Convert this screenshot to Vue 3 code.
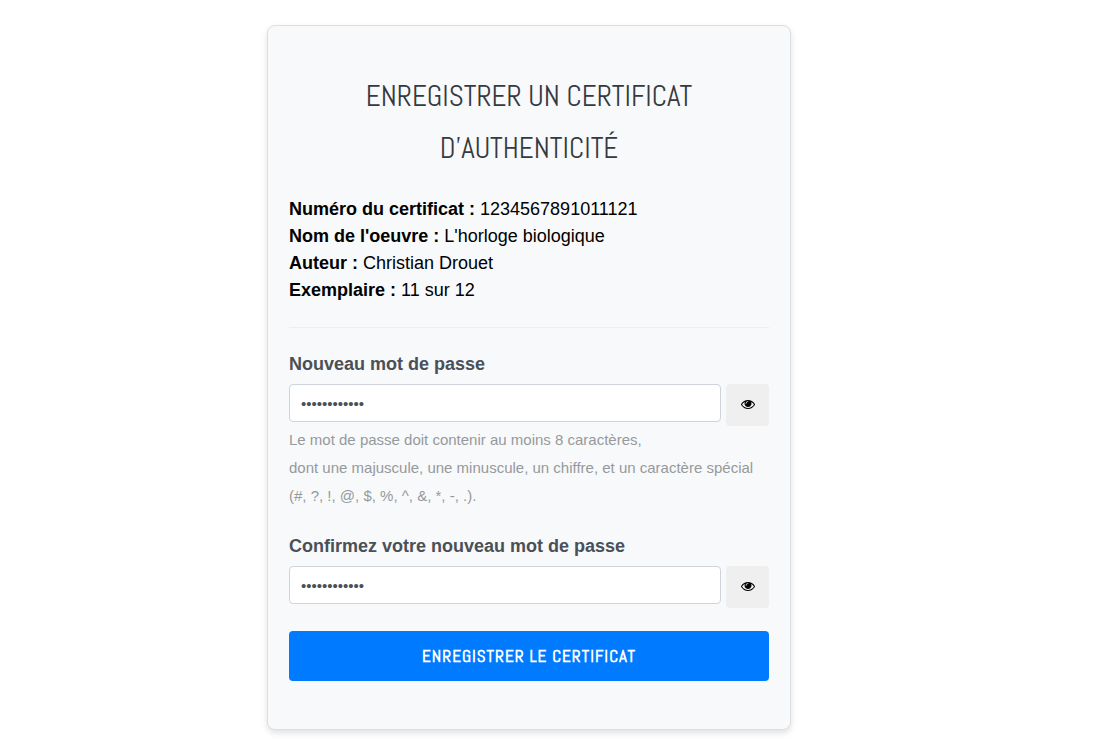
<script setup>
import { ref, reactive } from 'vue'

const certificate = [
  { label: 'Numéro du certificat :', value: '1234567891011121' },
  { label: "Nom de l'oeuvre :", value: "L'horloge biologique" },
  { label: 'Auteur :', value: 'Christian Drouet' },
  { label: 'Exemplaire :', value: '11 sur 12' },
]

const fields = [
  {
    id: 'password',
    label: 'Nouveau mot de passe',
    hint: [
      'Le mot de passe doit contenir au moins 8 caractères,',
      'dont une majuscule, une minuscule, un chiffre, et un caractère spécial',
      '(#, ?, !, @, $, %, ^, &, *, -, .).',
    ],
  },
  { id: 'confirmation', label: 'Confirmez votre nouveau mot de passe' },
]

const values = reactive({ password: 'Horloge#2024', confirmation: 'Horloge#2024' })
const visible = reactive({ password: false, confirmation: false })
const sent = ref(false)
</script>

<template>
  <main class="page">
    <form class="card" @submit.prevent="sent = true">
      <h1 class="title">Enregistrer un certificat<br />d'authenticité</h1>

      <div class="details">
        <div v-for="row in certificate" :key="row.label">
          <strong>{{ row.label }}</strong> {{ row.value }}
        </div>
      </div>

      <hr class="rule" />

      <div class="fields">
        <div v-for="field in fields" :key="field.id">
          <label class="label" :for="field.id">{{ field.label }}</label>
          <div class="row">
            <input
              :id="field.id"
              v-model="values[field.id]"
              class="input"
              :type="visible[field.id] ? 'text' : 'password'"
              autocomplete="new-password"
            />
            <button
              class="toggle"
              type="button"
              aria-label="Afficher le mot de passe"
              @click="visible[field.id] = !visible[field.id]"
            >
              <svg class="eye" viewBox="0 0 1792 1792" aria-hidden="true">
                <path
                  d="M1664 960q-152-236-381-353 61 104 61 225 0 185-131.500 316.500t-316.500 131.500-316.500-131.500-131.500-316.500q0-121 61-225-229 117-381 353 133 205 333.500 326.500t434.500 121.500 434.500-121.500 333.500-326.500zm-720-384q0-20-14-34t-34-14q-125 0-214.500 89.500t-89.500 214.500q0 20 14 34t34 14 34-14 14-34q0-86 61-147t147-61q20 0 34-14t14-34zm848 384q0 34-20 69-140 230-376.500 368.500t-499.500 138.500-499.500-139-376.500-368q-20-35-20-69t20-69q140-229 376.500-368t499.500-139 499.500 139 376.500 368q20 35 20 69z"
                />
              </svg>
            </button>
          </div>
          <p v-if="field.hint" class="hint">
            <span v-for="line in field.hint" :key="line" class="hint-line">{{ line }}</span>
          </p>
        </div>
      </div>

      <button class="submit" type="submit">Enregistrer le certificat</button>
    </form>
  </main>
</template>

<style>
body {
  margin: 0;
  background: #fff;
}
</style>

<style scoped>
.page {
  display: flex;
  justify-content: center;
  padding: 25px 35px 12px 0;
  font-family: "Liberation Sans", Arial, sans-serif;
  color: #000;
}

.card {
  box-sizing: border-box;
  width: 100%;
  max-width: 524px;
  padding: 45px 21px 48px;
  border: 1px solid #dcdee1;
  border-radius: 8px;
  background: #f8f9fb;
  box-shadow: 0 3px 6px rgba(0, 0, 0, 0.12);
}

.title {
  margin: 0 0 21px;
  font-family: Abel, "Open Sans Condensed", "Roboto Condensed", Lato, sans-serif;
  font-size: 29px;
  font-weight: 300;
  line-height: 52px;
  text-align: center;
  text-transform: uppercase;
  color: #343a40;
}

.details {
  font-size: 18px;
  line-height: 27px;
}

.rule {
  margin: 23px 0 22px;
  border: 0;
  border-top: 1px solid #eceef0;
}

.fields {
  display: grid;
  gap: 22px;
  margin-bottom: 23px;
}

.label {
  display: block;
  margin-bottom: 6px;
  font-size: 18px;
  font-weight: 700;
  line-height: 28px;
  color: #495057;
}

.row {
  display: flex;
  align-items: flex-start;
  gap: 5px;
  height: 42px;
}

.input {
  box-sizing: border-box;
  flex: 1;
  min-width: 0;
  height: 38px;
  padding: 6px 11px;
  border: 1px solid #ced4da;
  border-radius: 4px;
  background: #fff;
  font-family: "Liberation Sans", Arial, sans-serif;
  font-size: 15px;
  color: #495057;
}

.toggle {
  display: flex;
  align-items: center;
  justify-content: center;
  width: 43px;
  height: 42px;
  padding: 0 0 2px;
  border: 0;
  border-radius: 4px;
  background: #efefef;
  color: #000;
}

.eye {
  width: 14px;
  height: 14px;
  fill: currentColor;
}

.hint {
  margin: 0;
  font-size: 15px;
  line-height: 28px;
  color: #96999c;
}

.hint-line {
  display: block;
}

.submit {
  width: 100%;
  height: 50px;
  padding: 0;
  border: 0;
  border-radius: 4px;
  background: #007bff;
  font-family: Abel, "Open Sans Condensed", "Roboto Condensed", Lato, sans-serif;
  font-size: 17px;
  font-weight: 700;
  letter-spacing: 1px;
  text-transform: uppercase;
  color: #fff;
}
</style>
